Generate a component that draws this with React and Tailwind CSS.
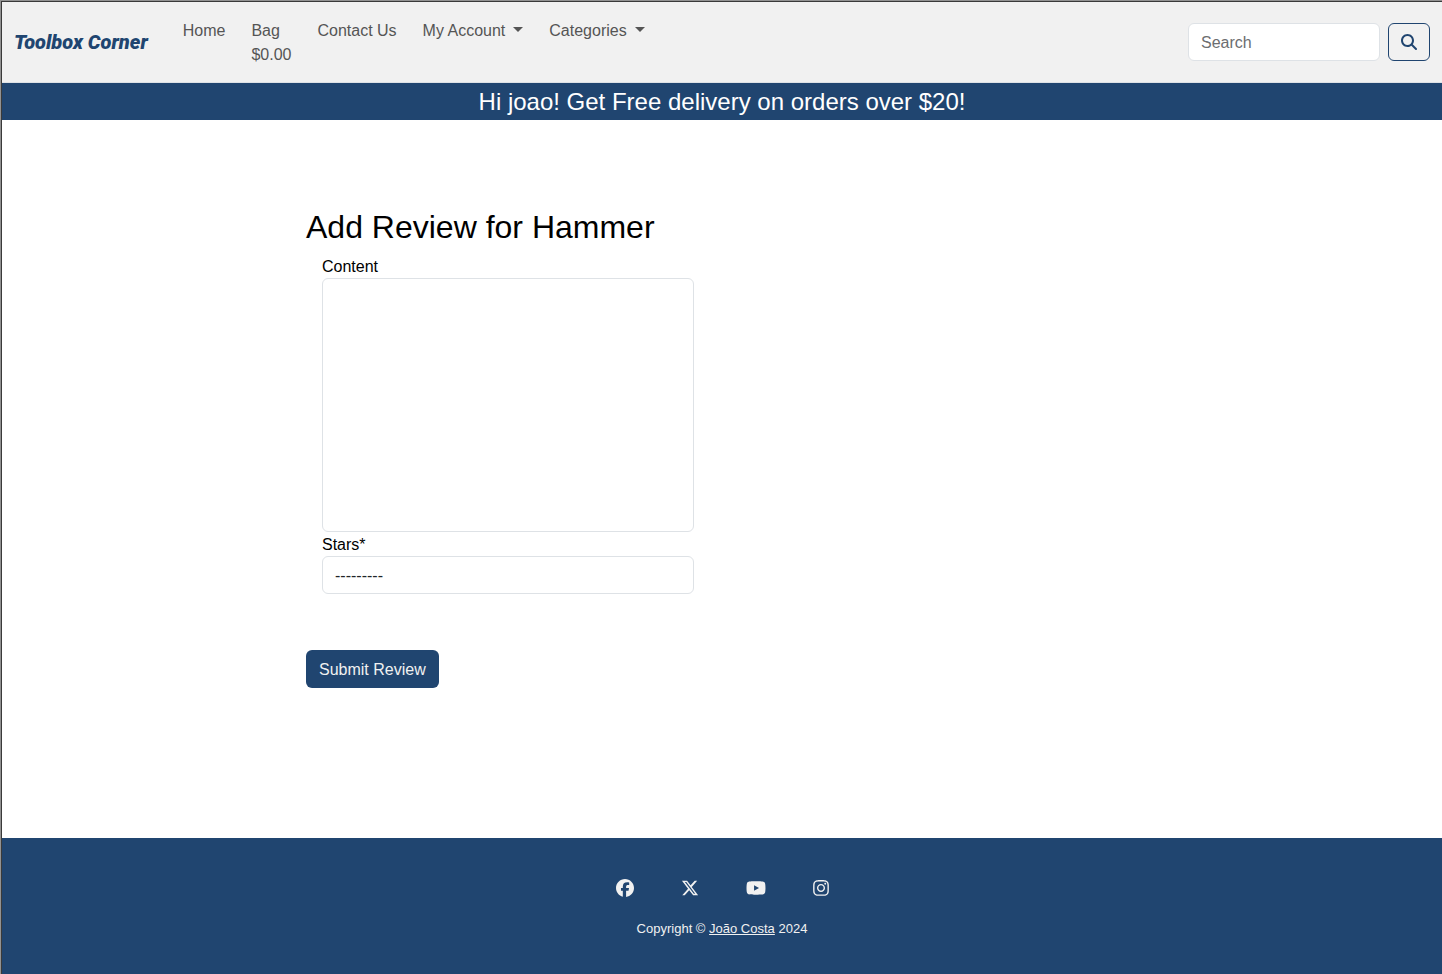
import { FaFacebook, FaInstagram, FaMagnifyingGlass, FaXTwitter, FaYoutube } from "react-icons/fa6";

function Caret() {
  return (
    <svg aria-hidden="true" viewBox="0 0 10 5" className="ml-2 mb-1 inline-block h-[5px] w-[10px] fill-current">
      <path d="M0 0h10L5 5z" />
    </svg>
  );
}

function Navbar() {
  return (
    <header className="flex items-center justify-between border-b border-[#dee2e6] bg-[#f1f1f1] px-3 py-2">
      <div className="flex items-center">
        <a href="#" className="mr-[27px] font-['Roboto',sans-serif] text-xl font-black italic text-[#204570]">
          Toolbox Corner
        </a>
        <nav>
          <ul className="flex gap-[10px] text-[#555555]">
            <li><a href="#" className="block px-2 pt-[9px] pb-[7px]">Home</a></li>
            <li>
              <a href="#" className="block px-2 pt-[9px] pb-[7px]">
                Bag
                <br />
                $0.00
              </a>
            </li>
            <li><a href="#" className="block px-2 pt-[9px] pb-[7px]">Contact Us</a></li>
            <li><button type="button" className="block px-2 pt-[9px] pb-[7px]">My Account<Caret /></button></li>
            <li><button type="button" className="block px-2 pt-[9px] pb-[7px]">Categories<Caret /></button></li>
          </ul>
        </nav>
      </div>
      <form className="flex gap-2" onSubmit={(e) => e.preventDefault()}>
        <input
          type="search"
          aria-label="Search"
          placeholder="Search"
          className="h-[38px] w-48 rounded-md border border-[#dee2e6] bg-white px-3 pt-[2px] placeholder:text-[#6c6d70]"
        />
        <button
          type="submit"
          aria-label="Submit search"
          className="flex h-[38px] w-[42px] items-center justify-center rounded-md border border-[#204570] text-[#204570]"
        >
          <FaMagnifyingGlass className="size-4" />
        </button>
      </form>
    </header>
  );
}

function ReviewForm() {
  return (
    <main className="mx-auto w-full max-w-[832px] grow pt-[87px]">
      <h1 className="text-[32px] leading-10">Add Review for Hammer</h1>
      <form className="mt-[7px] max-w-[404px]" onSubmit={(e) => e.preventDefault()}>
        <div className="flex flex-col px-4">
          <label htmlFor="content" className="pt-[2px] leading-[22px]">Content</label>
          <textarea
            id="content"
            className="h-[254px] resize-y rounded-md border border-[#dee2e6] px-3 py-1.5 [&::-webkit-resizer]:bg-transparent"
          />
          <label htmlFor="stars" className="pt-[2px] leading-[22px]">Stars*</label>
          <select
            id="stars"
            className="h-[38px] appearance-none rounded-md border border-[#dee2e6] bg-white px-3 pt-[2px] text-[#212529]"
          >
            <option>---------</option>
            <option>1</option>
            <option>2</option>
            <option>3</option>
            <option>4</option>
            <option>5</option>
          </select>
        </div>
        <button type="submit" className="mt-14 h-[38px] rounded-md bg-[#204570] px-[13px] pt-[2px] text-[#f1f1f1]">
          Submit Review
        </button>
      </form>
    </main>
  );
}

function Footer() {
  return (
    <footer className="flex flex-col items-center bg-[#204570] pt-[41px] pb-[35px] text-[#f1f1f1]">
      <div className="flex gap-[47px]">
        <a href="#" aria-label="Facebook"><FaFacebook className="size-[18px]" /></a>
        <a href="#" aria-label="X"><FaXTwitter className="size-[18px]" /></a>
        <a href="#" aria-label="YouTube"><FaYoutube className="h-[18px] w-5" /></a>
        <a href="#" aria-label="Instagram"><FaInstagram className="h-[18px] w-4" /></a>
      </div>
      <p className="mt-[22px] text-[13px] leading-5">
        Copyright © <a href="#" className="underline">João Costa</a> 2024
      </p>
    </footer>
  );
}

export default function App() {
  return (
    <div className="flex min-h-screen flex-col border-t border-l border-[#929292] bg-white font-['Liberation_Sans',Arial,sans-serif] text-base text-black">
      <div className="flex grow flex-col border-t border-l border-[#3a3a3a]">
        <Navbar />
        <p className="bg-[#204570] pt-[1px] text-center text-2xl leading-9 text-white">
          Hi joao! Get Free delivery on orders over $20!
        </p>
        <ReviewForm />
        <Footer />
      </div>
    </div>
  );
}
